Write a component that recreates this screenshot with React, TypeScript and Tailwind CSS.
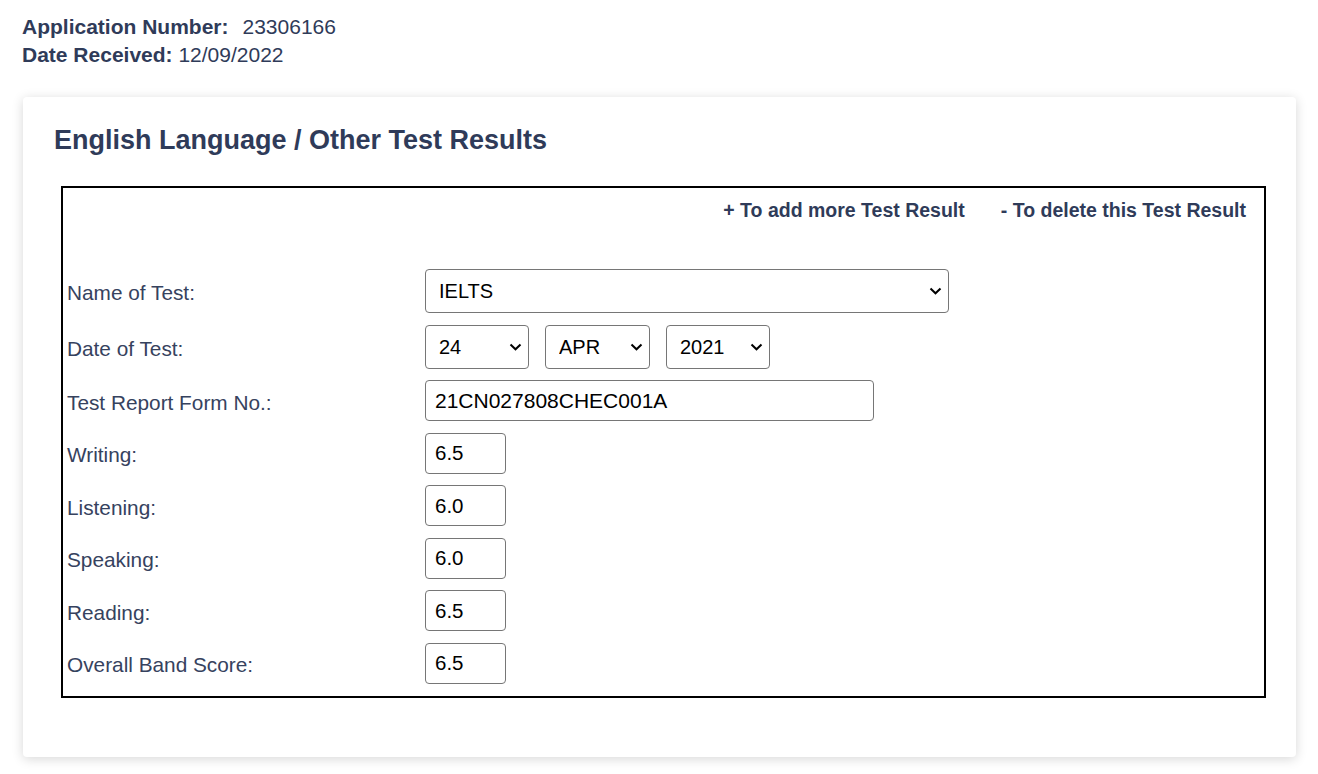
import React from 'react'

const Chevron = () => (
  <svg width="13" height="8" viewBox="0 0 13 8" className="pointer-events-none absolute right-[7px] top-1/2 -translate-y-1/2">
    <polyline points="1.5,1.5 6.5,6.3 11.5,1.5" fill="none" stroke="#000" strokeWidth="2" />
  </svg>
)

function Select({ value, options, width }: { value: string; options: string[]; width: string }) {
  return (
    <div className={`relative ${width}`}>
      <select
        defaultValue={value}
        className="w-full h-[44px] appearance-none rounded-[4px] border border-[#767676] bg-white pl-[13px] pr-8 text-[20px] text-black outline-none"
      >
        {options.map(o => <option key={o} value={o}>{o}</option>)}
      </select>
      <Chevron />
    </div>
  )
}

function Field({ label, children }: { label: string; children: React.ReactNode }) {
  return (
    <div className="flex items-center">
      <label className="w-[358px] shrink-0 pt-[4px] text-[20.8px] text-[#36425e]">{label}</label>
      {children}
    </div>
  )
}

export default function App() {
  const scores = [
    { label: 'Writing:', val: '6.5' },
    { label: 'Listening:', val: '6.0' },
    { label: 'Speaking:', val: '6.0' },
    { label: 'Reading:', val: '6.5' },
    { label: 'Overall Band Score:', val: '6.5' },
  ]

  return (
    <div className="min-h-screen bg-white font-['Liberation_Sans',Arial,sans-serif] text-[#2f3b59]">
      <div className="pl-[22px] pt-[13px] text-[21px] leading-[28px]">
        <div><span className="font-bold">Application Number:</span><span className="ml-[14px]">23306166</span></div>
        <div><span className="font-bold">Date Received:</span> 12/09/2022</div>
      </div>

      <div className="ml-[23px] mr-[22px] mt-[28px] rounded-[4px] bg-white px-[31px] pt-[28px] pb-[59px] shadow-[0_2px_12px_rgba(0,0,0,0.16)]">
        <h2 className="text-[27px] font-bold leading-[31px] text-[#2f3b59]">English Language / Other Test Results</h2>

        <div className="ml-[7px] mr-[-1px] mt-[30px] border-2 border-black pl-[4px] pr-[18px] pt-[11px] pb-[12px]">
          <div className="flex justify-end gap-[36px] text-[19.5px] font-bold leading-[23px] text-[#2f3b59]">
            <a href="#">+ To add more Test Result</a>
            <a href="#">- To delete this Test Result</a>
          </div>

          <div className="mt-[47px] flex flex-col gap-[11.5px]">
            <Field label="Name of Test:">
              <Select value="IELTS" options={['IELTS', 'TOEFL', 'PTE']} width="w-[524px]" />
            </Field>
            <Field label="Date of Test:">
              <div className="flex gap-[16px]">
                <Select value="24" options={['24']} width="w-[104px]" />
                <Select value="APR" options={['APR']} width="w-[105px]" />
                <Select value="2021" options={['2021']} width="w-[104px]" />
              </div>
            </Field>
            <Field label="Test Report Form No.:">
              <input
                defaultValue="21CN027808CHEC001A"
                className="h-[41px] w-[449px] rounded-[4px] border border-[#767676] px-[9px] text-[21px] text-black outline-none"
              />
            </Field>
            {scores.map(s => (
              <Field key={s.label} label={s.label}>
                <input
                  defaultValue={s.val}
                  className="h-[41px] w-[81px] rounded-[4px] border border-[#767676] px-[9px] text-[20.5px] text-black outline-none"
                />
              </Field>
            ))}
          </div>
        </div>
      </div>
    </div>
  )
}
